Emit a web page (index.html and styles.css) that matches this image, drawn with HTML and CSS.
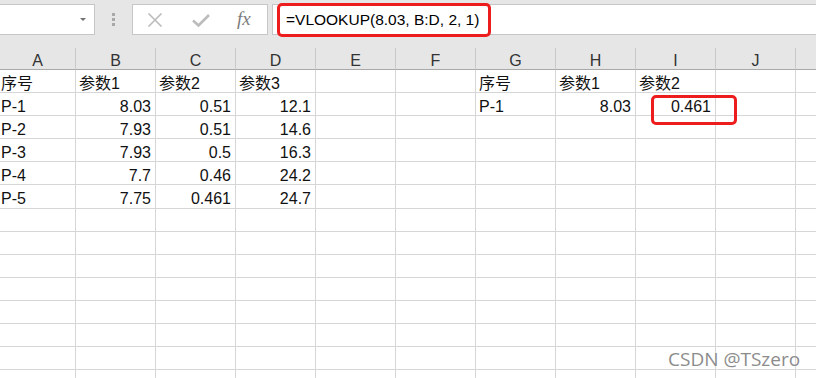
FILE: index.html
```html
<!DOCTYPE html>
<html lang="zh">
<head>
    <meta charset="UTF-8">
    <title>VLOOKUP</title>
    <link rel="stylesheet" href="styles.css">
</head>
<body>

    <div class="toolbar">
        <div class="namebox"><span class="caret"></span></div>
        <div class="grip"><i></i><i></i><i></i></div>
        <div class="fxbox">
            <svg class="ico-x" width="16" height="14" viewBox="0 0 16 14">
                <path d="M1.5 0.5 L14.5 13.5 M14.5 0.5 L1.5 13.5" stroke="#bcbcbc" stroke-width="1.6" fill="none"/>
            </svg>
            <svg class="ico-ok" width="18" height="13" viewBox="0 0 18 13">
                <path d="M1 6.5 L6.5 11.5 L17 1" stroke="#bcbcbc" stroke-width="2.6" fill="none"/>
            </svg>
            <span class="fx">fx</span>
        </div>
        <div class="formula">
            <span>=VLOOKUP(8.03, B:D, 2, 1)</span>
            <div class="mark mark-formula"></div>
        </div>
    </div>

    <div class="sheet">
        <div class="row head">
            <div>A</div><div>B</div><div>C</div><div>D</div><div>E</div><div>F</div>
            <div>G</div><div>H</div><div>I</div><div>J</div><div></div>
        </div>
        <div class="row">
            <div class="a">序号</div><div>参数1</div><div>参数2</div><div>参数3</div><div></div><div></div>
            <div>序号</div><div>参数1</div><div>参数2</div><div></div><div></div>
        </div>
        <div class="row">
            <div class="a">P-1</div><div class="num">8.03</div><div class="num">0.51</div><div class="num">12.1</div><div></div><div></div>
            <div>P-1</div><div class="num">8.03</div><div class="num hit">0.461<div class="mark mark-cell"></div></div><div></div><div></div>
        </div>
        <div class="row">
            <div class="a">P-2</div><div class="num">7.93</div><div class="num">0.51</div><div class="num">14.6</div><div></div><div></div>
            <div></div><div></div><div></div><div></div><div></div>
        </div>
        <div class="row">
            <div class="a">P-3</div><div class="num">7.93</div><div class="num">0.5</div><div class="num">16.3</div><div></div><div></div>
            <div></div><div></div><div></div><div></div><div></div>
        </div>
        <div class="row">
            <div class="a">P-4</div><div class="num">7.7</div><div class="num">0.46</div><div class="num">24.2</div><div></div><div></div>
            <div></div><div></div><div></div><div></div><div></div>
        </div>
        <div class="row">
            <div class="a">P-5</div><div class="num">7.75</div><div class="num">0.461</div><div class="num">24.7</div><div></div><div></div>
            <div></div><div></div><div></div><div></div><div></div>
        </div>
        <div class="row"><div></div><div></div><div></div><div></div><div></div><div></div><div></div><div></div><div></div><div></div><div></div></div>
        <div class="row"><div></div><div></div><div></div><div></div><div></div><div></div><div></div><div></div><div></div><div></div><div></div></div>
        <div class="row"><div></div><div></div><div></div><div></div><div></div><div></div><div></div><div></div><div></div><div></div><div></div></div>
        <div class="row"><div></div><div></div><div></div><div></div><div></div><div></div><div></div><div></div><div></div><div></div><div></div></div>
        <div class="row"><div></div><div></div><div></div><div></div><div></div><div></div><div></div><div></div><div></div><div></div><div></div></div>
        <div class="row"><div></div><div></div><div></div><div></div><div></div><div></div><div></div><div></div><div></div><div></div><div></div></div>
        <div class="row"><div></div><div></div><div></div><div></div><div></div><div></div><div></div><div></div><div></div><div></div><div></div></div>
        <div class="row"><div></div><div></div><div></div><div></div><div></div><div></div><div></div><div></div><div></div><div></div><div></div></div>
    </div>

    <div class="watermark">CSDN @TSzero</div>

</body>
</html>
```

FILE: styles.css
```css
body {
    margin: 0;
    width: 816px;
    height: 378px;
    overflow: hidden;
    position: relative;
    background: #ffffff;
    font-family: "Liberation Sans", "Noto Sans CJK SC", sans-serif;
    color: #111;
}

/* formula bar */
.toolbar {
    display: flex;
    align-items: flex-start;
    height: 48px;
    padding-top: 4px;
    box-sizing: border-box;
    background: #e6e6e6;
}

.namebox {
    width: 96px;
    height: 31px;
    margin-left: -1px;
    box-sizing: border-box;
    background: white;
    border: 1px solid #c6c6c6;
    position: relative;
}

.caret {
    position: absolute;
    right: 8px;
    top: 13px;
    border-left: 3px solid transparent;
    border-right: 3px solid transparent;
    border-top: 3px solid #707070;
}

.grip {
    width: 37px;
    height: 31px;
    display: flex;
    flex-direction: column;
    align-items: center;
    justify-content: center;
    gap: 2px;
}

.grip i {
    display: block;
    width: 3px;
    height: 3px;
    background: #a8a8a8;
}

.fxbox {
    width: 136px;
    height: 31px;
    box-sizing: border-box;
    background: white;
    border: 1px solid #c6c6c6;
    display: flex;
    align-items: center;
    padding-left: 14px;
}

.ico-x {
    margin-right: 29px;
}

.ico-ok {
    margin-right: 27px;
    margin-top: 1px;
}

.fx {
    font-family: "Liberation Serif", serif;
    font-style: italic;
    font-size: 19px;
    color: #7c7c7c;
    margin-top: -2px;
}

.formula {
    flex: 1;
    height: 31px;
    margin-left: 4px;
    margin-right: -1px;
    box-sizing: border-box;
    background: white;
    border: 1px solid #c6c6c6;
    padding-left: 13px;
    font-size: 15.5px;
    line-height: 29px;
    color: #000;
    position: relative;
}

/* red annotation boxes */
.mark {
    position: absolute;
    border: 3px solid #ee1d1d;
    border-radius: 5px;
    box-sizing: border-box;
    z-index: 2;
}

.mark-formula {
    left: 4px;
    top: -2px;
    width: 214px;
    height: 34px;
}

.mark-cell {
    left: 15px;
    top: 2px;
    width: 86px;
    height: 30px;
}

/* grid */
.sheet {
    width: 816px;
    overflow: hidden;
}

.row {
    display: grid;
    grid-template-columns: 76px repeat(10, 80px);
}

.row > div {
    box-sizing: border-box;
    height: 23.1px;
    border-right: 1px solid #d6d6d6;
    border-bottom: 1px solid #d6d6d6;
    padding: 6px 4px 0 3px;
    font-size: 16px;
    line-height: 16px;
    white-space: nowrap;
    position: relative;
}

.row > div.a {
    padding-left: 1px;
}

.row > div.num {
    text-align: right;
}

.head {
    background: #e6e6e6;
}

.head > div {
    height: 22px;
    padding: 5px 0 0 0;
    text-align: center;
    color: #333;
    border-right-color: #c9c9c9;
    border-bottom-color: #a9a9a9;
}

.watermark {
    position: absolute;
    left: 668px;
    top: 350px;
    font-family: "Open Sans", sans-serif;
    font-size: 19px;
    line-height: 19px;
    color: #8c8c8c;
    text-shadow: 0 0 2px #fff;
}
```
